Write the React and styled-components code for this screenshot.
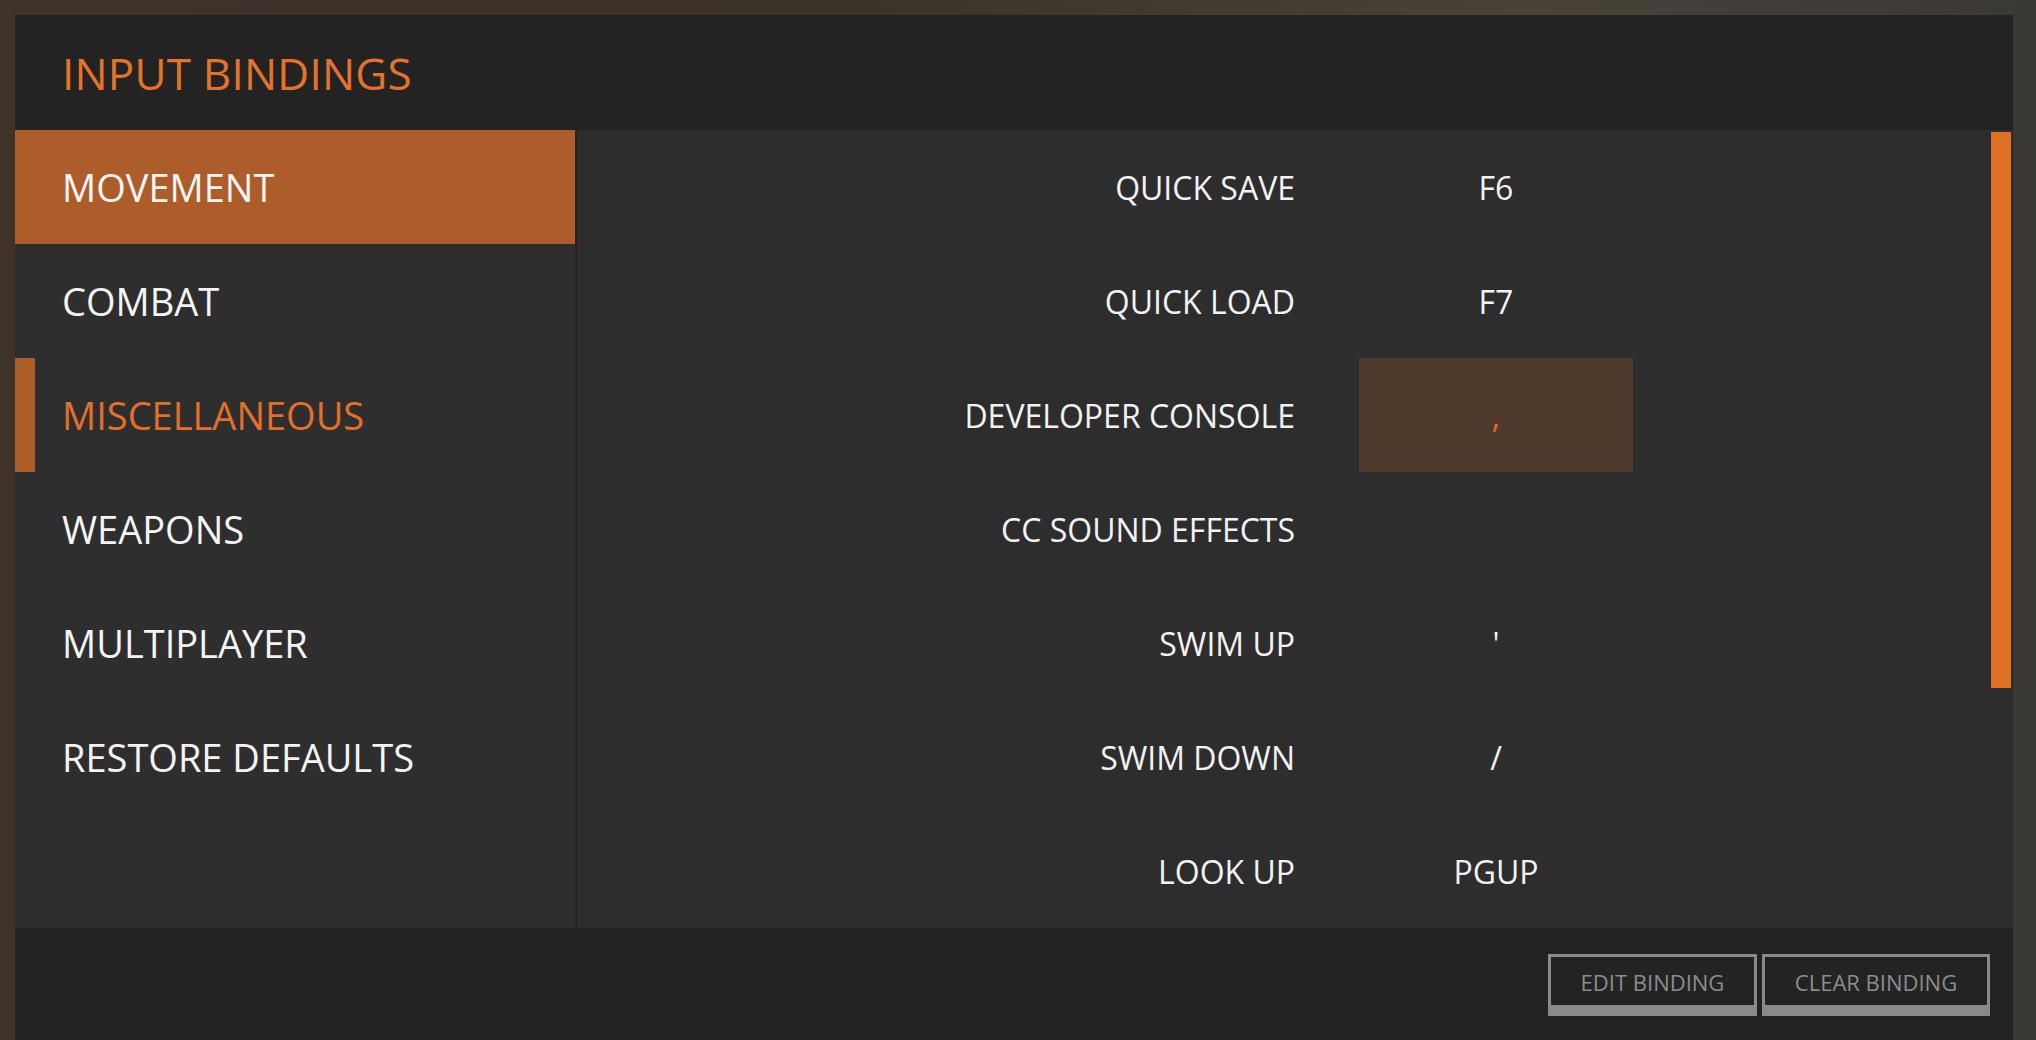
import React from "react";
import styled, { createGlobalStyle } from "styled-components";

const Global = createGlobalStyle`
  html, body { margin: 0; padding: 0; height: 100%; overflow: hidden; }
  body {
    background: linear-gradient(90deg, #3f3229 0%, #3a3129 40%, #4a4238 75%, #3a3835 100%);
    font-family: "Open Sans", "Noto Sans", sans-serif;
  }
`;

const Page = styled.div`
  padding: 15px 23px 0 15px;
  height: 1040px;
  box-sizing: border-box;
`;

const Panel = styled.div`
  display: flex;
  flex-direction: column;
  background: #2d2d2d;
  height: 1160px;
`;

const Header = styled.header`
  height: 115px;
  background: #232323;
  display: flex;
  align-items: center;
  padding-left: 47px;
`;

const Title = styled.h1`
  margin: 0;
  font-weight: 400;
  font-size: 44px;
  color: #e4732a;
  letter-spacing: 0.2px;
`;

const Body = styled.div`
  display: flex;
  height: 798px;
`;

const Sidebar = styled.nav`
  width: 560px;
  background: #2e2e2e;
  border-right: 3px solid #262626;
  display: flex;
  flex-direction: column;
`;

const NavItem = styled.div`
  height: 114px;
  display: flex;
  align-items: center;
  padding-left: 47px;
  font-size: 38px;
  position: relative;
  color: ${(p) => (p.$focus ? "#e2702a" : "#f4f4f4")};
  background: ${(p) => (p.$active ? "#ad5d29" : "transparent")};
  &::before {
    content: "";
    display: ${(p) => (p.$focus ? "block" : "none")};
    position: absolute;
    left: 0;
    top: 0;
    bottom: 0;
    width: 20px;
    background: #ad5d29;
  }
`;

const Content = styled.section`
  flex: 1;
  display: flex;
  background: #2d2d2d;
`;

const List = styled.div`
  flex: 1;
  display: flex;
  flex-direction: column;
`;

const Row = styled.div`
  height: 114px;
  display: grid;
  grid-template-columns: 717px 274px;
  column-gap: 64px;
  align-items: stretch;
`;

const Label = styled.div`
  display: flex;
  align-items: center;
  justify-content: flex-end;
  font-size: 32px;
  color: #f2f2f2;
`;

const Value = styled.div`
  display: flex;
  align-items: center;
  justify-content: center;
  font-size: 32px;
  color: ${(p) => (p.$selected ? "#e2702a" : "#f2f2f2")};
  background: ${(p) => (p.$selected ? "#4f3a2c" : "transparent")};
`;

const Track = styled.div`
  width: 20px;
  margin: 2px 2px 0 0;
`;

const Thumb = styled.div`
  height: 556px;
  background: #e07024;
`;

const Footer = styled.footer`
  flex: 1;
  background: #232323;
  display: flex;
  justify-content: flex-end;
  align-items: flex-start;
  gap: 5px;
  padding: 26px 23px 0 0;
`;

const Button = styled.button`
  height: 62px;
  padding: 0 24px;
  background: #232323;
  border: 3px solid #8a8a8a;
  border-bottom-width: 11px;
  color: #8c8c8c;
  font-family: "Open Sans", "Noto Sans", sans-serif;
  font-size: 22px;
  width: ${(p) => p.$w}px;
  box-sizing: border-box;
  padding-top: 1px;
`;

const nav = [
  { label: "MOVEMENT", active: true },
  { label: "COMBAT" },
  { label: "MISCELLANEOUS", focus: true },
  { label: "WEAPONS" },
  { label: "MULTIPLAYER" },
  { label: "RESTORE DEFAULTS" },
];

const bindings = [
  { label: "QUICK SAVE", value: "F6" },
  { label: "QUICK LOAD", value: "F7" },
  { label: "DEVELOPER CONSOLE", value: ",", selected: true },
  { label: "CC SOUND EFFECTS", value: "" },
  { label: "SWIM UP", value: "'" },
  { label: "SWIM DOWN", value: "/" },
  { label: "LOOK UP", value: "PGUP" },
];

export default function App() {
  return (
    <>
      <Global />
      <Page>
        <Panel>
          <Header>
            <Title>INPUT BINDINGS</Title>
          </Header>
          <Body>
            <Sidebar>
              {nav.map((n) => (
                <NavItem key={n.label} $active={n.active} $focus={n.focus}>
                  {n.label}
                </NavItem>
              ))}
            </Sidebar>
            <Content>
              <List>
                {bindings.map((b) => (
                  <Row key={b.label}>
                    <Label>{b.label}</Label>
                    <Value $selected={b.selected}>{b.value}</Value>
                  </Row>
                ))}
              </List>
              <Track>
                <Thumb />
              </Track>
            </Content>
          </Body>
          <Footer>
            <Button $w={209}>EDIT BINDING</Button>
            <Button $w={228}>CLEAR BINDING</Button>
          </Footer>
        </Panel>
      </Page>
    </>
  );
}
